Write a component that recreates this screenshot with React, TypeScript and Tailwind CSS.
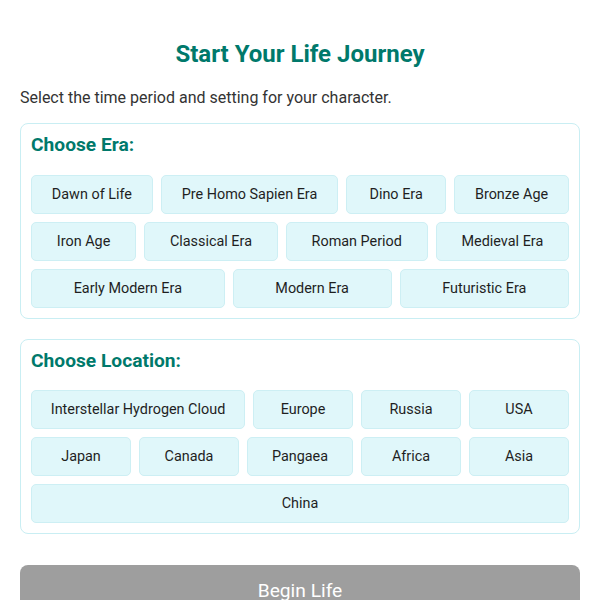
import { useState } from "react";

const ERAS = [
  "Dawn of Life",
  "Pre Homo Sapien Era",
  "Dino Era",
  "Bronze Age",
  "Iron Age",
  "Classical Era",
  "Roman Period",
  "Medieval Era",
  "Early Modern Era",
  "Modern Era",
  "Futuristic Era",
];

const LOCATIONS = [
  "Interstellar Hydrogen Cloud",
  "Europe",
  "Russia",
  "USA",
  "Japan",
  "Canada",
  "Pangaea",
  "Africa",
  "Asia",
  "China",
];

function OptionGroup({
  title,
  options,
  selected,
  onSelect,
}: {
  title: string;
  options: string[];
  selected: string | null;
  onSelect: (v: string) => void;
}) {
  return (
    <div className="rounded-lg border border-[#c9eef3] bg-white p-[10px]">
      <h3 className="mb-[18px] text-[19.2px] leading-[22.5px] font-bold text-[#00796b]">
        {title}
      </h3>
      <div className="flex flex-wrap gap-2">
        {options.map((opt) => (
          <button
            key={opt}
            onClick={() => onSelect(opt)}
            className={`min-w-[100px] flex-auto rounded-[5px] border px-[17px] py-[10px] text-center text-[14.4px] leading-[normal] text-[#1f1f1f] ${
              selected === opt
                ? "border-[#00796b] bg-[#b2dfdb]"
                : "border-[#cdeff4] bg-[#e0f7fa]"
            }`}
          >
            {opt}
          </button>
        ))}
      </div>
    </div>
  );
}

export default function App() {
  const [era, setEra] = useState<string | null>(null);
  const [location, setLocation] = useState<string | null>(null);
  const ready = era !== null && location !== null;

  return (
    <div className="min-h-screen bg-white px-5 font-['Roboto',sans-serif]">
      <h1 className="pt-10 text-center text-[24px] leading-[28px] font-bold text-[#00796b]">
        Start Your Life Journey
      </h1>
      <p className="mt-5 mb-4 text-[16px] leading-[19px] text-[#333]">
        Select the time period and setting for your character.
      </p>

      <div className="flex flex-col gap-5">
        <OptionGroup title="Choose Era:" options={ERAS} selected={era} onSelect={setEra} />
        <OptionGroup
          title="Choose Location:"
          options={LOCATIONS}
          selected={location}
          onSelect={setLocation}
        />
      </div>

      <button
        disabled={!ready}
        className={`mt-[31px] w-full rounded-lg py-[15px] text-[19.2px] leading-[22.5px] text-white ${
          ready ? "bg-[#00796b]" : "bg-[#9e9e9e]"
        }`}
      >
        Begin Life
      </button>
    </div>
  );
}
